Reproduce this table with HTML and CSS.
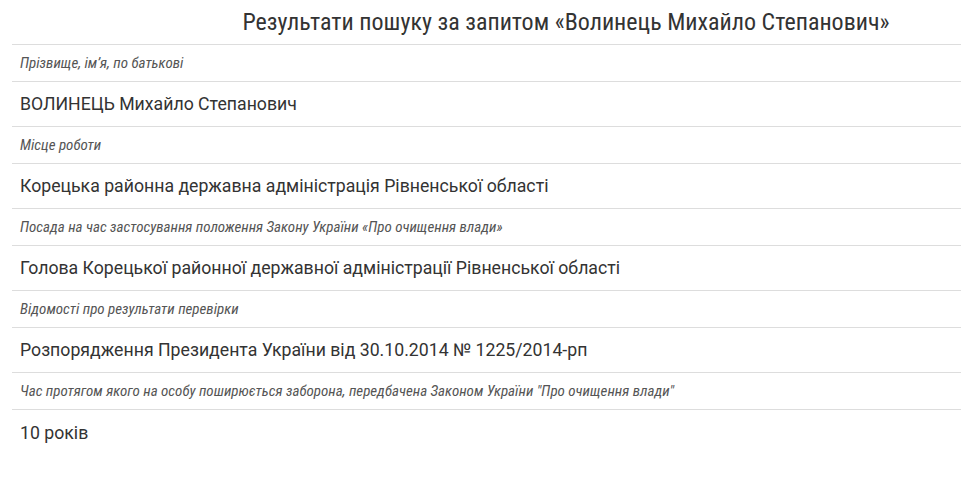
FILE: index.html
```html
<!DOCTYPE html>
<html lang="uk">
<head>
<meta charset="utf-8">
<link rel="stylesheet" href="styles.css">
</head>
<body>
<div class="page">
  <h2 class="title">Результати пошуку за запитом «Волинець Михайло Степанович»</h2>
  <div class="table">
    <div class="label">Прізвище, ім’я, по батькові</div>
    <div class="value">ВОЛИНЕЦЬ Михайло Степанович</div>
    <div class="label">Місце роботи</div>
    <div class="value">Корецька районна державна адміністрація Рівненської області</div>
    <div class="label">Посада на час застосування положення Закону України «Про очищення влади»</div>
    <div class="value">Голова Корецької районної державної адміністрації Рівненської області</div>
    <div class="label">Відомості про результати перевірки</div>
    <div class="value">Розпорядження Президента України від 30.10.2014 № 1225/2014-рп</div>
    <div class="label">Час протягом якого на особу поширюється заборона, передбачена Законом України "Про очищення влади"</div>
    <div class="value last">10 років</div>
  </div>
</div>
</body>
</html>
```

FILE: styles.css
```css
html, body {
  margin: 0;
  padding: 0;
  background: #fff;
}
body {
  font-family: Roboto, "Noto Sans", sans-serif;
  color: #333;
}
.page {
  margin-left: 12px;
}
.title {
  margin: 0;
  height: 45px;
  box-sizing: border-box;
  padding: 6px 0 0 159px;
  text-align: center;
  white-space: nowrap;
  font-family: "Roboto Condensed", Roboto, sans-serif;
  font-stretch: condensed;
  font-weight: 400;
  font-size: 24px;
  line-height: 32px;
  color: #333;
  border-bottom: 1px solid #ddd;
}
.label {
  height: 37px;
  box-sizing: border-box;
  padding-left: 8px;
  display: flex;
  align-items: center;
  font-family: "Roboto Condensed", Roboto, sans-serif;
  font-stretch: condensed;
  font-style: italic;
  font-size: 15px;
  color: #555;
  border-bottom: 1px solid #ddd;
}
.value {
  height: 45px;
  box-sizing: border-box;
  padding-left: 8px;
  display: flex;
  align-items: center;
  font-size: 17.7px;
  color: #333;
  border-bottom: 1px solid #ddd;
}
.value.last {
  border-bottom: none;
}
```
